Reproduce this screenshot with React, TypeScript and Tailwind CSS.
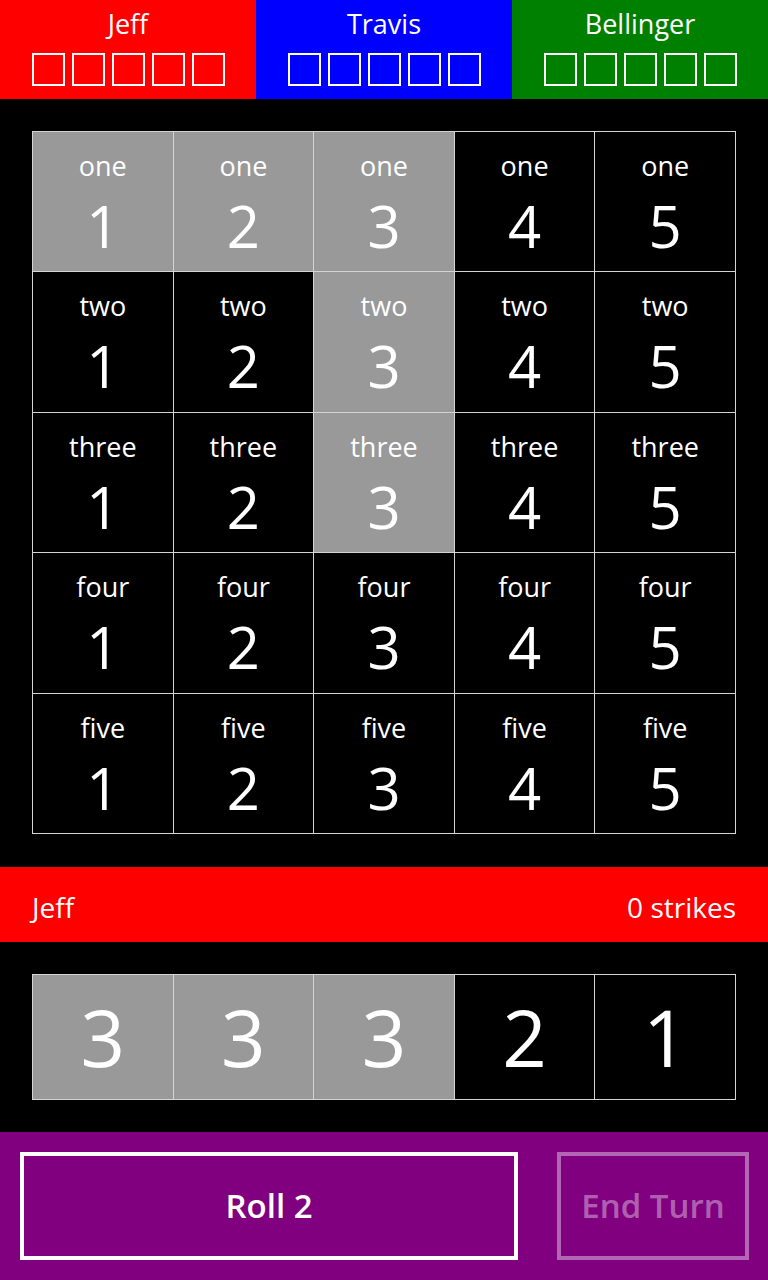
import React from 'react'

// players shown in the top bar
const players = [
  { name: 'Jeff', bg: 'bg-[#ff0000]' },
  { name: 'Travis', bg: 'bg-[#0000ff]' },
  { name: 'Bellinger', bg: 'bg-[#008000]' },
]

const rowNames = ['one', 'two', 'three', 'four', 'five']

// cells already scored (row index, col index)
const marked = new Set(['0-0', '0-1', '0-2', '1-2', '2-2'])

const dice = [
  { value: 3, held: true },
  { value: 3, held: true },
  { value: 3, held: true },
  { value: 2, held: false },
  { value: 1, held: false },
]

const font = { fontFamily: '"Open Sans", "Noto Sans", sans-serif' }

export default function App() {
  return (
    <div className="w-[768px] h-[1280px] bg-black text-white flex flex-col" style={font}>
      {/* players */}
      <div className="grid grid-cols-3 h-[99px]">
        {players.map((p) => (
          <div key={p.name} className={`${p.bg} flex flex-col items-center pt-[4px]`}>
            <span className="text-[27px] leading-[40px]">{p.name}</span>
            <div className="flex gap-[7px] mt-[9px]">
              {[0, 1, 2, 3, 4].map((i) => (
                <div key={i} className="w-[33px] h-[33px] border-2 border-white" />
              ))}
            </div>
          </div>
        ))}
      </div>

      {/* board */}
      <div className="mx-8 mt-8 h-[703px] grid grid-cols-5 grid-rows-5 gap-px p-px bg-[#d4d4d4]">
        {rowNames.map((name, r) =>
          [1, 2, 3, 4, 5].map((n, c) => (
            <div
              key={`${r}-${c}`}
              className={`${marked.has(`${r}-${c}`) ? 'bg-[#999999]' : 'bg-black'} flex flex-col items-center pt-[14px]`}
            >
              <span className="text-[27px] leading-[40px]">{name}</span>
              <span className="text-[58px] leading-[64px] mt-[8px]">{n}</span>
            </div>
          ))
        )}
      </div>

      {/* current player */}
      <div className="mt-[33px] h-[75px] bg-[#ff0000] flex items-center justify-between px-8 pt-[5px]">
        <span className="text-[28px]">Jeff</span>
        <span className="text-[28px]">0 strikes</span>
      </div>

      {/* dice */}
      <div className="mx-8 mt-8 h-[126px] grid grid-cols-5 gap-px p-px bg-[#d4d4d4]">
        {dice.map((d, i) => (
          <div
            key={i}
            className={`${d.held ? 'bg-[#999999]' : 'bg-black'} flex items-center justify-center`}
          >
            <span className="text-[78px] leading-none">{d.value}</span>
          </div>
        ))}
      </div>

      {/* actions */}
      <div className="mt-8 flex-1 bg-[#800080] flex items-center pl-[20px] pr-[19px] gap-[39px]">
        <button className="w-[498px] h-[108px] border-4 border-white text-[33px] font-semibold">
          Roll 2
        </button>
        <button className="flex-1 h-[108px] border-4 border-white/40 text-white/40 text-[33px] font-semibold">
          End Turn
        </button>
      </div>
    </div>
  )
}
